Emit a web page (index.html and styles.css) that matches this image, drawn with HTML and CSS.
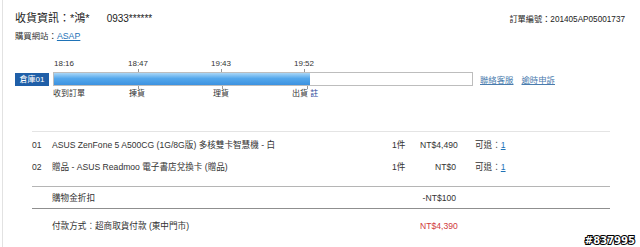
FILE: index.html
```html
<!DOCTYPE html>
<html lang="zh-Hant">
<head>
    <meta charset="UTF-8">
    <title>訂單明細</title>
    <link rel="stylesheet" href="styles.css">
</head>
<body>
    <div class="page">
        <!-- order header -->
        <div class="head">
            <div>
                <div class="buyer">收貨資訊：*鴻* <span class="phone">0933******</span></div>
                <div class="site">購買網站：<a href="#">ASAP</a></div>
            </div>
            <div class="order_no">訂單編號：201405AP05001737</div>
        </div>

        <!-- shipping timeline -->
        <div class="timeline">
            <div class="store">倉庫01</div>
            <div class="track">
                <div class="fill" style="width: 61.3%"></div>
                <span class="time" style="left: 0">18:16</span>
                <span class="time tick" style="left: 74px">18:47</span>
                <span class="time tick" style="left: 157px">19:43</span>
                <span class="time tick" style="left: 240px">19:52</span>
                <span class="step" style="left: -1px">收到訂單</span>
                <span class="step tick" style="left: 75px">揀貨</span>
                <span class="step tick" style="left: 159px">理貨</span>
                <span class="step tick end" style="left: 238px">出貨 <a href="#">註</a></span>
            </div>
            <div class="links">
                <a href="#">聯絡客服</a>
                <a href="#">逾時申訴</a>
            </div>
        </div>

        <!-- items -->
        <div class="items">
            <div class="row first">
                <span>01</span>
                <span>ASUS ZenFone 5 A500CG (1G/8G版) 多核雙卡智慧機 - 白</span>
                <span>1件</span>
                <span class="price">NT$4,490</span>
                <span class="refund">可退：<a href="#">1</a></span>
            </div>
            <div class="row">
                <span>02</span>
                <span>贈品 - ASUS Readmoo 電子書店兌換卡 (贈品)</span>
                <span>1件</span>
                <span class="price">NT$0</span>
                <span class="refund">可退：<a href="#">1</a></span>
            </div>
            <div class="row sum">
                <span></span>
                <span>購物金折扣</span>
                <span></span>
                <span class="price">-NT$100</span>
                <span></span>
            </div>
            <div class="row pay">
                <span></span>
                <span>付款方式：超商取貨付款 (東中門市)</span>
                <span></span>
                <span class="price total">NT$4,390</span>
                <span></span>
            </div>
        </div>
    </div>

    <div class="stamp">#837995</div>
</body>
</html>
```

FILE: styles.css
```css
* {
    margin: 0;
    padding: 0;
    box-sizing: border-box;
}

body {
    width: 640px;
    height: 247px;
    overflow: hidden;
    background-color: #fff;
    font-family: "Liberation Sans", "Noto Sans CJK TC", sans-serif;
    font-size: 8.6px;
    color: #333;
}

a {
    color: #2f6fa8;
    text-decoration: underline;
}

.page {
    margin-left: 2px;
    height: 247px;
    border-left: 1px solid #e2e2e2;
    padding: 11px 15px 0 12px;
}

/* header */
.head {
    display: flex;
    justify-content: space-between;
    align-items: flex-start;
}

.buyer {
    font-size: 11px;
    line-height: 14px;
    color: #222;
}

.phone {
    margin-left: 14px;
    font-size: 10px;
}

.site {
    margin-top: 4px;
    line-height: 12px;
    font-size: 8.4px;
}

.site a {
    color: #1f73b7;
    font-size: 8.8px;
}

.order_no {
    margin-top: 3px;
    margin-right: 0;
    font-size: 8.2px;
    line-height: 12px;
    color: #222;
}

/* timeline */
.timeline {
    display: flex;
    align-items: center;
    margin-top: 18px;
    padding: 12px 0 12px;
}

.store {
    width: 34px;
    height: 13px;
    line-height: 13px;
    text-align: center;
    color: #fff;
    background-color: #1f5fa8;
    font-size: 8px;
    margin-right: 4px;
}

.track {
    position: relative;
    width: 420px;
    height: 14px;
    border: 1px solid #bdbdbd;
    background-color: #fff;
}

.fill {
    height: 100%;
    background: linear-gradient(#a9d6f7, #55a8ec 45%, #3c92e0);
}

.time, .step {
    position: absolute;
    white-space: nowrap;
    font-size: 8px;
    line-height: 10px;
    color: #333;
}

.time {
    top: -14px;
}

.step {
    top: 16px;
}

.time.tick::after {
    content: "";
    position: absolute;
    left: 10px;
    top: 10px;
    width: 1px;
    height: 3px;
    background-color: #999;
}

.step.tick::before {
    content: "";
    position: absolute;
    left: 9px;
    top: -3px;
    width: 1px;
    height: 3px;
    background-color: #999;
}

.step.end::before {
    left: 15px;
}

.step a {
    color: #2a3f9a;
    text-decoration: none;
}

.links {
    display: flex;
    gap: 8px;
    margin-left: 7px;
    font-size: 8.4px;
}

.links a {
    color: #4a7cae;
}

/* item table */
.items {
    margin: 33px 0 0 17px;
    width: 578px;
    border-top: 1px solid #e4e4e4;
}

.row {
    display: grid;
    grid-template-columns: 20px 340px 28px 36px auto;
    align-items: center;
    height: 22px;
    line-height: 22px;
}

.row.first {
    margin-top: 2px;
}

.price {
    text-align: right;
}

.refund {
    margin-left: 19px;
}

.refund a {
    color: #1f73b7;
}

.row.sum {
    margin-top: 8px;
    border-top: 1px solid #b5b5b5;
}

.row.pay {
    border-top: 1px solid #8f8f8f;
    height: 34px;
    line-height: 34px;
}

.total {
    color: #d0393b;
}

.stamp {
    position: absolute;
    right: 5px;
    bottom: 1px;
    font-family: "DejaVu Sans", sans-serif;
    font-weight: bold;
    font-size: 10px;
    color: #fff;
    -webkit-text-stroke: 2px #000;
    paint-order: stroke fill;
}
```
